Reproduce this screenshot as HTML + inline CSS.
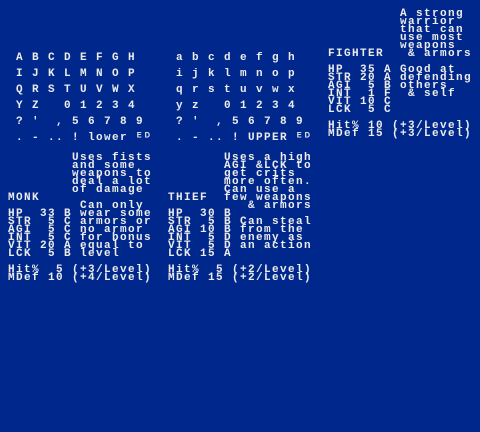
<!DOCTYPE html>
<html><head><meta charset="utf-8"><style>
html,body{margin:0;padding:0;background:#00288c;}
body{width:480px;height:432px;position:relative;overflow:hidden;}
pre{position:absolute;margin:0;font-family:"Liberation Mono",monospace;font-weight:bold;font-size:11px;line-height:8px;letter-spacing:1.4px;color:#ececec;white-space:pre;}
</style></head><body>
<pre style="left:16px;top:50px;line-height:16px">A B C D E F G H
I J K L M N O P
Q R S T U V W X
Y Z   0 1 2 3 4
? '  , 5 6 7 8 9
. - .. ! lower ᴱᴰ</pre>
<pre style="left:176px;top:50px;line-height:16px">a b c d e f g h
i j k l m n o p
q r s t u v w x
y z   0 1 2 3 4
? '  , 5 6 7 8 9
. - .. ! UPPER ᴱᴰ</pre>
<pre style="left:328px;top:10px">         A strong
         warrior
         that can
         use most
         weapons
FIGHTER   & armors

HP  35 A Good at
STR 20 A defending
AGI  5 B others
INT  1 F  & self
VIT 10 C
LCK  5 C

Hit% 10 (+3/Level)
MDef 15 (+3/Level)</pre>
<pre style="left:8px;top:154px">        Uses fists
        and some
        weapons to
        deal a lot
        of damage
MONK
         Can only
HP  33 B wear some
STR  5 C armors or
AGI  5 C no armor
INT  5 C for bonus
VIT 20 A equal to
LCK  5 B level

Hit%  5 (+3/Level)
MDef 10 (+4/Level)</pre>
<pre style="left:168px;top:154px">       Uses a high
       AGI &LCK to
       get crits
       more often.
       Can use a
THIEF  few weapons
          & armors
HP  30 B
STR  5 B Can steal
AGI 10 B from the
INT  5 D enemy as
VIT  5 D an action
LCK 15 A

Hit%  5 (+2/Level)
MDef 15 (+2/Level)</pre>
</body></html>
